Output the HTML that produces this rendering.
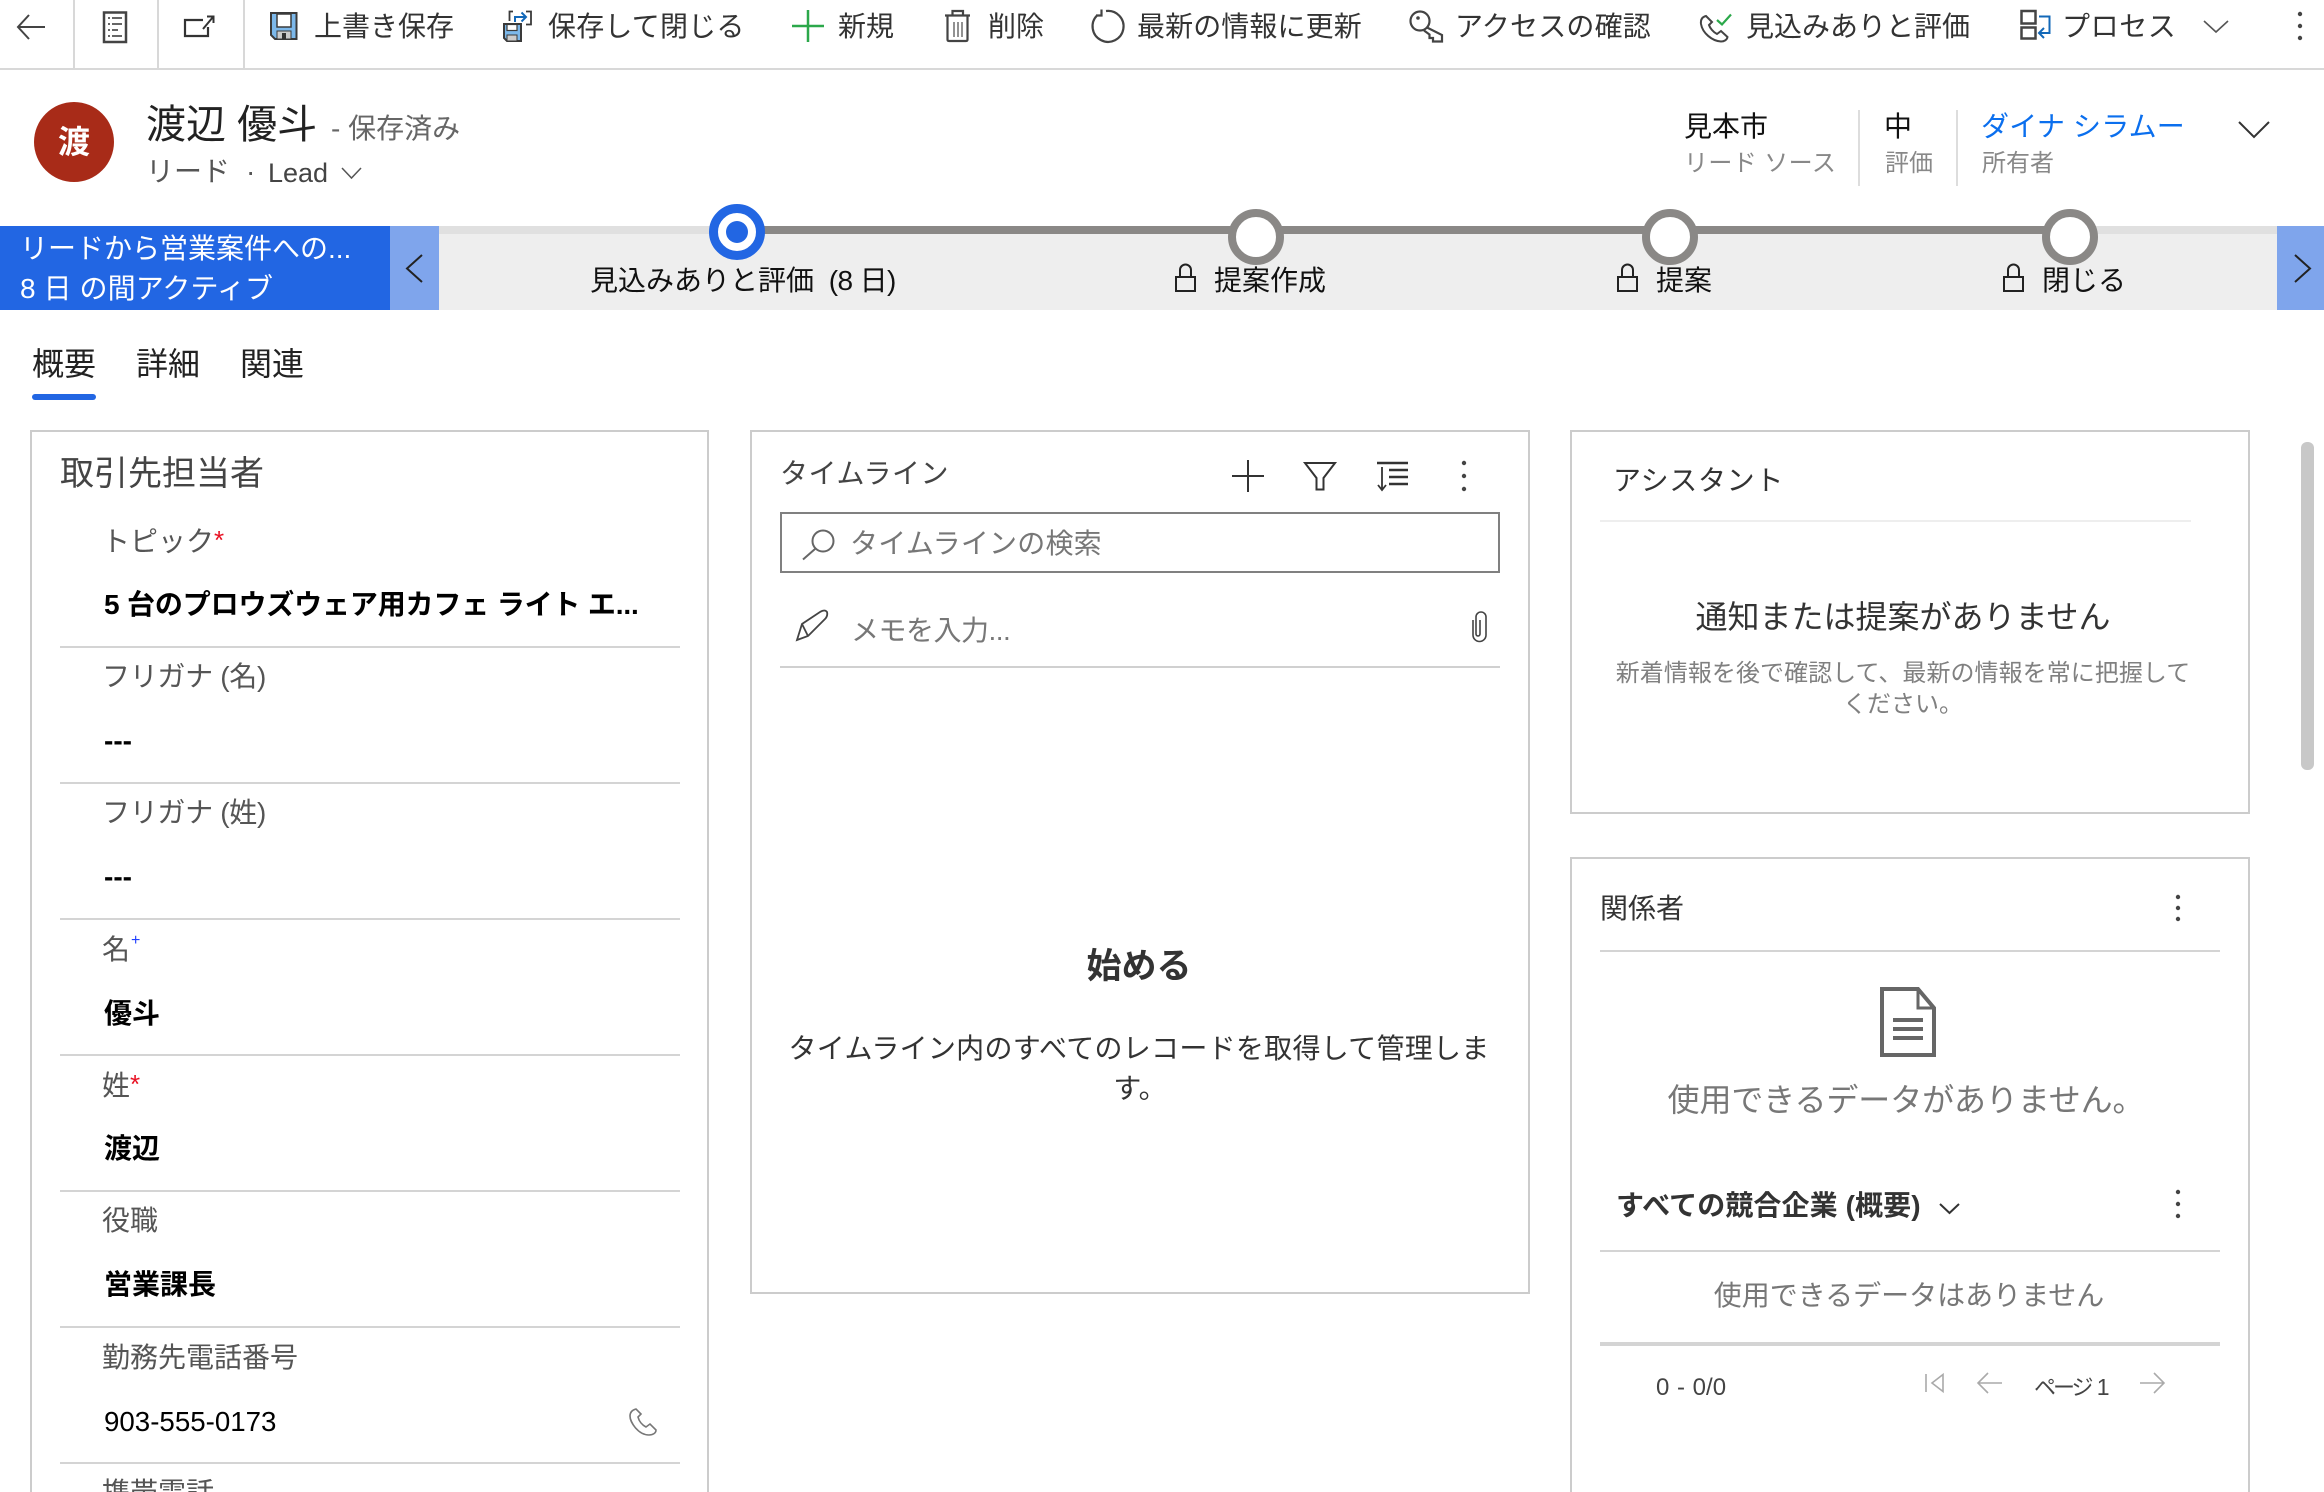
<!DOCTYPE html>
<html lang="ja">
<head>
<meta charset="utf-8">
<title>渡辺 優斗 - リード</title>
<style>
html,body{margin:0;padding:0;background:#fff;width:2324px;height:1492px;overflow:hidden}
body{position:relative;font-family:"Liberation Sans","Noto Sans CJK JP",sans-serif;font-size:28px;color:#333}
.t{position:absolute;white-space:nowrap;line-height:44px;margin-top:-22px}
.b{position:absolute}
.card{position:absolute;box-sizing:border-box;border:2px solid #ccc;background:#fff}
.c{text-align:center;transform:translateX(-50%)}
.l{color:#555}
.v{color:#000;font-weight:700}
.g{color:#777}
.s{font-size:24px}
.st{color:#e81123;font-size:26px;line-height:0;vertical-align:2px}
svg{position:absolute;left:0;top:0}
</style>
</head>
<body>
<!-- command bar -->
<div class="b" style="left:0;top:68px;width:2324px;height:2px;background:#d8d8d8"></div>
<div class="b" style="left:73px;top:0;width:2px;height:68px;background:#d8d8d8"></div>
<div class="b" style="left:157px;top:0;width:2px;height:68px;background:#d8d8d8"></div>
<div class="b" style="left:243px;top:0;width:2px;height:68px;background:#d8d8d8"></div>
<div class="t" style="left:314px;top:27px">上書き保存</div>
<div class="t" style="left:548px;top:27px;letter-spacing:.2px">保存して閉じる</div>
<div class="t" style="left:838px;top:27px">新規</div>
<div class="t" style="left:988px;top:27px">削除</div>
<div class="t" style="left:1137px;top:27px;letter-spacing:.1px">最新の情報に更新</div>
<div class="t" style="left:1455px;top:27px;letter-spacing:.2px">アクセスの確認</div>
<div class="t" style="left:1746px;top:27px">見込みありと評価</div>
<div class="t" style="left:2062px;top:27px;letter-spacing:.6px">プロセス</div>

<!-- header -->
<div class="b" style="left:34px;top:102px;width:80px;height:80px;border-radius:50%;background:#a82b18;color:#fff;font-weight:700;font-size:32px;line-height:81px;text-align:center">渡</div>
<div class="t" style="left:146px;top:125px;font-size:40px;color:#222">渡辺 優斗</div>
<div class="t" style="left:331px;top:129px;color:#666">- 保存済み</div>
<div class="t" style="left:146px;top:172px;color:#555">リード</div>
<div class="t" style="left:246px;top:172px;color:#555">·</div>
<div class="t" style="left:268px;top:173px;color:#444;font-size:27px">Lead</div>
<div class="t" style="left:1684px;top:127px;color:#111">見本市</div>
<div class="t s" style="left:1684px;top:164px;color:#888;letter-spacing:.4px">リード ソース</div>
<div class="b" style="left:1858px;top:110px;width:2px;height:76px;background:#ddd"></div>
<div class="t" style="left:1884px;top:127px;color:#111">中</div>
<div class="t s" style="left:1885px;top:164px;color:#888">評価</div>
<div class="b" style="left:1956px;top:110px;width:2px;height:76px;background:#ddd"></div>
<div class="t" style="left:1981px;top:127px;color:#0b6fee;letter-spacing:.2px">ダイナ シラムー</div>
<div class="t s" style="left:1982px;top:164px;color:#888">所有者</div>

<!-- BPF -->
<div class="b" style="left:439px;top:226px;width:1839px;height:84px;background:#eee"></div>
<div class="b" style="left:439px;top:226px;width:1839px;height:8px;background:#e0e0e0"></div>
<div class="b" style="left:737px;top:226px;width:1333px;height:8px;background:#8a8886"></div>
<div class="b" style="left:0;top:226px;width:390px;height:84px;background:#2266e3"></div>
<div class="b" style="left:390px;top:226px;width:49px;height:84px;background:#7fa5ec"></div>
<div class="b" style="left:2277px;top:226px;width:47px;height:84px;background:#7fa5ec"></div>
<div class="t" style="left:20px;top:249px;color:#fff">リードから営業案件への...</div>
<div class="t" style="left:20px;top:289px;color:#fff;letter-spacing:.1px">8 日 の間アクティブ</div>
<div class="b" style="left:709px;top:204px;width:56px;height:56px;box-sizing:border-box;border:9px solid #2266e3;border-radius:50%;background:#fff"></div>
<div class="b" style="left:726px;top:221px;width:22px;height:22px;border-radius:50%;background:#2266e3"></div>
<div class="b" style="left:1228px;top:209px;width:56px;height:56px;box-sizing:border-box;border:8px solid #8a8886;border-radius:50%;background:#fff"></div>
<div class="b" style="left:1642px;top:209px;width:56px;height:56px;box-sizing:border-box;border:8px solid #8a8886;border-radius:50%;background:#fff"></div>
<div class="b" style="left:2042px;top:209px;width:56px;height:56px;box-sizing:border-box;border:8px solid #8a8886;border-radius:50%;background:#fff"></div>
<div class="t" style="left:590px;top:281px;color:#111">見込みありと評価 <span style="margin-left:7px;letter-spacing:-.6px">(8 日)</span></div>
<div class="t" style="left:1214px;top:281px;color:#111">提案作成</div>
<div class="t" style="left:1656px;top:281px;color:#111">提案</div>
<div class="t" style="left:2042px;top:281px;color:#111">閉じる</div>

<!-- tabs -->
<div class="t" style="left:32px;top:364px;font-size:32px;color:#222">概要</div>
<div class="t" style="left:136px;top:364px;font-size:32px;color:#222">詳細</div>
<div class="t" style="left:240px;top:364px;font-size:32px;color:#222">関連</div>
<div class="b" style="left:32px;top:394px;width:64px;height:6px;border-radius:3px;background:#2266e3"></div>

<!-- contact card -->
<div class="card" style="left:30px;top:430px;width:679px;height:1100px"></div>
<div class="t" style="left:60px;top:474px;font-size:34px;color:#444">取引先担当者</div>
<div class="t l" style="left:102px;top:541.500px">トピック<span class="st">*</span></div>
<div class="t v" style="left:104px;top:605px;letter-spacing:-.15px">5 台のプロウズウェア用カフェ ライト エ...</div>
<div class="b" style="left:60px;top:646px;width:620px;height:2px;background:#d4d4d4"></div>
<div class="t l" style="left:102px;top:677px;letter-spacing:-.3px">フリガナ (名)</div>
<div class="t v" style="left:104px;top:741px">---</div>
<div class="b" style="left:60px;top:782px;width:620px;height:2px;background:#d4d4d4"></div>
<div class="t l" style="left:102px;top:813px;letter-spacing:-.3px">フリガナ (姓)</div>
<div class="t v" style="left:104px;top:877px">---</div>
<div class="b" style="left:60px;top:918px;width:620px;height:2px;background:#d4d4d4"></div>
<div class="t l" style="left:102px;top:950px">名<span style="color:#1f3fff;font-size:16px;line-height:0;vertical-align:14px;margin-left:1px">+</span></div>
<div class="t v" style="left:104px;top:1014px">優斗</div>
<div class="b" style="left:60px;top:1054px;width:620px;height:2px;background:#d4d4d4"></div>
<div class="t l" style="left:102px;top:1086px">姓<span class="st">*</span></div>
<div class="t v" style="left:104px;top:1149px">渡辺</div>
<div class="b" style="left:60px;top:1190px;width:620px;height:2px;background:#d4d4d4"></div>
<div class="t l" style="left:102px;top:1221px">役職</div>
<div class="t v" style="left:104px;top:1285px">営業課長</div>
<div class="b" style="left:60px;top:1326px;width:620px;height:2px;background:#d4d4d4"></div>
<div class="t l" style="left:102px;top:1358px">勤務先電話番号</div>
<div class="t" style="left:104px;top:1422px;color:#000;font-size:27.700px">903-555-0173</div>
<div class="b" style="left:60px;top:1462px;width:620px;height:2px;background:#d4d4d4"></div>
<div class="t l" style="left:102px;top:1493px">携帯電話</div>

<!-- timeline card -->
<div class="card" style="left:750px;top:430px;width:780px;height:864px"></div>
<div class="t" style="left:780px;top:474px;color:#444;letter-spacing:.5px">タイムライン</div>
<div class="b" style="left:780px;top:512px;width:720px;height:61px;box-sizing:border-box;border:2px solid #808080"></div>
<div class="t g" style="left:850px;top:544px;letter-spacing:.2px">タイムラインの検索</div>
<div class="t g" style="left:851px;top:631px;letter-spacing:-.5px">メモを入力...</div>
<div class="b" style="left:780px;top:666px;width:720px;height:2px;background:#d0d0d0"></div>
<div class="t c" style="left:1139px;top:967px;font-size:35px;font-weight:700;color:#333">始める</div>
<div class="t c" style="left:1139px;top:1049px;color:#333;letter-spacing:.28px">タイムライン内のすべてのレコードを取得して管理しま</div>
<div class="t c" style="left:1140px;top:1089px;color:#333">す。</div>

<!-- assistant card -->
<div class="card" style="left:1570px;top:430px;width:680px;height:384px"></div>
<div class="t" style="left:1613px;top:481px;color:#333;letter-spacing:.7px">アシスタント</div>
<div class="b" style="left:1600px;top:520px;width:591px;height:2px;background:#eee"></div>
<div class="t c" style="left:1903px;top:617px;font-size:32px;color:#333">通知または提案がありません</div>
<div class="t c s" style="left:1903px;top:674px;color:#808080;letter-spacing:.05px">新着情報を後で確認して、最新の情報を常に把握して</div>
<div class="t c s" style="left:1903px;top:705px;color:#808080">ください。</div>

<!-- stakeholder card -->
<div class="card" style="left:1570px;top:857px;width:680px;height:700px"></div>
<div class="t" style="left:1600px;top:909px;color:#333">関係者</div>
<div class="b" style="left:1600px;top:950px;width:620px;height:2px;background:#d4d4d4"></div>
<div class="t c" style="left:1906px;top:1100px;font-size:32px;color:#777;letter-spacing:-.1px">使用できるデータがありません。</div>
<div class="t" style="left:1616px;top:1206px;font-weight:700;color:#333;letter-spacing:.1px">すべての競合企業 (概要)</div>
<div class="b" style="left:1600px;top:1250px;width:620px;height:2px;background:#d4d4d4"></div>
<div class="t c" style="left:1909px;top:1296px;color:#777">使用できるデータはありません</div>
<div class="b" style="left:1600px;top:1342px;width:620px;height:4px;background:#d4d4d4"></div>
<div class="t s" style="left:1656px;top:1388px;color:#444;word-spacing:1px">0 - 0/0</div>
<div class="t" style="left:2034px;top:1387px;font-size:22px;letter-spacing:-3px;color:#444">ページ <span style="font-size:23px;margin-left:3px">1</span></div>

<!-- scrollbar -->
<div class="b" style="left:2301px;top:442px;width:13px;height:328px;border-radius:6px;background:#c8c8c8"></div>

<!-- icons -->
<svg width="2324" height="1492" viewBox="0 0 2324 1492" fill="none">
  <!-- back -->
  <path d="M45 27H18M29 15L18 27L29 39" stroke="#444" stroke-width="2"/>
  <!-- notes -->
  <rect x="104" y="12.500" width="22" height="29.500" stroke="#444" stroke-width="2.500"/>
  <path d="M108 18h2M112 18h10M108 24h2M112 24h10M108 30h2M112 30h6M108 36h2M112 36h10" stroke="#666" stroke-width="2"/>
  <!-- open in new -->
  <path d="M203 20H185V36H208V27" stroke="#333" stroke-width="2.200"/>
  <path d="M203 29L213 17M207 16.500H213.500V23" stroke="#333" stroke-width="2"/>
  <!-- save -->
  <path d="M271 13H296.500V39H275L271 35Z" fill="#7cb8ea" stroke="#3a3a3a" stroke-width="2"/>
  <rect x="277" y="14" width="14" height="13" fill="#fff" stroke="#3a3a3a" stroke-width="1.500"/>
  <rect x="277" y="31" width="14" height="8" fill="#ccc" stroke="#3a3a3a" stroke-width="1"/>
  <rect x="282" y="33" width="4" height="6" fill="#333"/>
  <!-- save and close -->
  <path d="M504 24H521V41H507L504 38Z" fill="#7cb8ea" stroke="#3a3a3a" stroke-width="2"/>
  <rect x="507" y="24.500" width="10" height="6" fill="#fff" stroke="#3a3a3a" stroke-width="1.200"/>
  <rect x="507" y="35" width="10" height="6" fill="#ccc" stroke="#3a3a3a" stroke-width="1"/>
  <path d="M509.500 21V11.500H513M526 11.500H531V24.500H526" stroke="#3a3a3a" stroke-width="1.800"/>
  <path d="M515 22V17H526M521.500 12.500L526 17L521.500 21.500" stroke="#1368b8" stroke-width="2"/>
  <!-- new -->
  <path d="M808 10V42M792 26H824" stroke="#2ba84a" stroke-width="2.500"/>
  <!-- delete -->
  <path d="M945 15.500H970M952.500 15.500V11H963V15.500M947.500 15.500V39.500Q947.500 41 949 41H966Q967.500 41 967.500 39.500V15.500" stroke="#444" stroke-width="2.200"/>
  <path d="M954 22V37M958 22V37M962 22V37" stroke="#777" stroke-width="1.600"/>
  <!-- refresh -->
  <path d="M1106 11A15.500 15.500 0 1 1 1097 15.500" stroke="#444" stroke-width="2.200"/>
  <path d="M1101.500 9.500V15.500H1096" stroke="#444" stroke-width="2.200"/>
  <!-- key -->
  <circle cx="1420" cy="21" r="9.500" stroke="#444" stroke-width="2.200"/>
  <circle cx="1418" cy="18" r="1.800" fill="#444"/>
  <path d="M1427 27.500L1442 35V41.500H1433V38H1429.500V34.500L1424 30.500" stroke="#444" stroke-width="2.200"/>
  <!-- phone check -->
  <path d="M1706 16C1702 17 1700.500 20 1701 24C1702.500 33 1712 41 1721 41.500C1724 41.500 1727 40 1727.500 37L1721 31L1717 34C1713 32 1710 28 1709 25L1712 22Z" stroke="#444" stroke-width="2"/>
  <path d="M1717 20L1722 24.500L1731 14.500" stroke="#2ba84a" stroke-width="2.200"/>
  <!-- process -->
  <rect x="2021.500" y="11" width="14" height="12.500" stroke="#444" stroke-width="2.500"/>
  <rect x="2021.500" y="27.500" width="14" height="11" stroke="#444" stroke-width="2.500"/>
  <path d="M2039 16.500H2049.500V33H2039M2044 28L2039 33L2044 38" stroke="#1368b8" stroke-width="2"/>
  <!-- chevron process -->
  <path d="M2204 21L2216 32L2228 21" stroke="#555" stroke-width="1.600"/>
  <!-- overflow -->
  <circle cx="2300" cy="14" r="2.200" fill="#444"/><circle cx="2300" cy="26" r="2.200" fill="#444"/><circle cx="2300" cy="38" r="2.200" fill="#444"/>
  <!-- header chevrons -->
  <path d="M342 168L351.500 178L361 168" stroke="#555" stroke-width="1.500"/>
  <path d="M2239 122L2254 137L2269 122" stroke="#333" stroke-width="2"/>
  <!-- bpf arrows -->
  <path d="M422 255L407 268.500L422 282" stroke="#222" stroke-width="2"/>
  <path d="M2295 255L2310 268.500L2295 282" stroke="#222" stroke-width="2"/>
  <!-- locks -->
  <g stroke="#222" stroke-width="2">
    <rect x="1176" y="277" width="19" height="14"/><path d="M1180 277V270a5.500 5.500 0 0 1 11 0V277"/>
    <rect x="1618" y="277" width="19" height="14"/><path d="M1622 277V270a5.500 5.500 0 0 1 11 0V277"/>
    <rect x="2004" y="277" width="19" height="14"/><path d="M2008 277V270a5.500 5.500 0 0 1 11 0V277"/>
  </g>
  <!-- field phone -->
  <g transform="translate(629,1408)" stroke="#777" stroke-width="1.600">
    <path d="M7 1C3 2 1 4 1 8C1 14 9 27 20 27C24 27 27 25 27 22L21 16L17 19C13 17 10 13 9 9L12 6Z"/>
  </g>
  <!-- timeline actions -->
  <path d="M1248 460V492M1232 476H1264" stroke="#333" stroke-width="2"/>
  <path d="M1305 463H1335L1323.500 478V489.500H1316.500V478Z" stroke="#333" stroke-width="2"/>
  <path d="M1377 463H1408M1389 470H1408M1389 477H1408M1389 484H1408" stroke="#333" stroke-width="2.400"/>
  <path d="M1382 467V489M1378 485L1382 490L1386 485" stroke="#333" stroke-width="1.800"/>
  <circle cx="1464" cy="463" r="2.200" fill="#444"/><circle cx="1464" cy="476" r="2.200" fill="#444"/><circle cx="1464" cy="489" r="2.200" fill="#444"/>
  <!-- search -->
  <circle cx="823" cy="541" r="10.500" stroke="#666" stroke-width="2"/>
  <path d="M815 549L803 559.500" stroke="#666" stroke-width="2"/>
  <!-- pencil -->
  <path d="M797 640L802 624L820 612Q825 609 827 612Q828 616 825 619L808 636ZM802 624L808 636" stroke="#444" stroke-width="1.800"/>
  <!-- clip -->
  <path d="M1473 620V635a6.500 6.500 0 0 0 13 0V617a5 5 0 0 0 -10 0V634a2 2 0 0 0 4 0V620" stroke="#444" stroke-width="1.600"/>
  <!-- stakeholder dots -->
  <circle cx="2178" cy="897" r="2.200" fill="#444"/><circle cx="2178" cy="908" r="2.200" fill="#444"/><circle cx="2178" cy="919" r="2.200" fill="#444"/>
  <circle cx="2178" cy="1192" r="2.200" fill="#444"/><circle cx="2178" cy="1204" r="2.200" fill="#444"/><circle cx="2178" cy="1216" r="2.200" fill="#444"/>
  <!-- doc -->
  <path d="M1882 989H1918L1934 1008V1055H1882Z" stroke="#666" stroke-width="4"/>
  <path d="M1918 989V1008H1934" stroke="#666" stroke-width="3"/>
  <path d="M1893 1020H1923M1893 1029H1923M1893 1038H1923" stroke="#666" stroke-width="4"/>
  <!-- competitor chevron -->
  <path d="M1940 1204L1949.500 1213L1959 1204" stroke="#333" stroke-width="2"/>
  <!-- pagination -->
  <path d="M1926 1374V1392M1943 1374.500L1932 1383L1943 1391.500Z" stroke="#aaa" stroke-width="1.600"/>
  <path d="M2002 1383H1979M1988 1373L1978 1383L1988 1393" stroke="#aaa" stroke-width="1.600"/>
  <path d="M2140 1383H2163M2154 1373L2164 1383L2154 1393" stroke="#aaa" stroke-width="1.600"/>
</svg>
</body>
</html>
